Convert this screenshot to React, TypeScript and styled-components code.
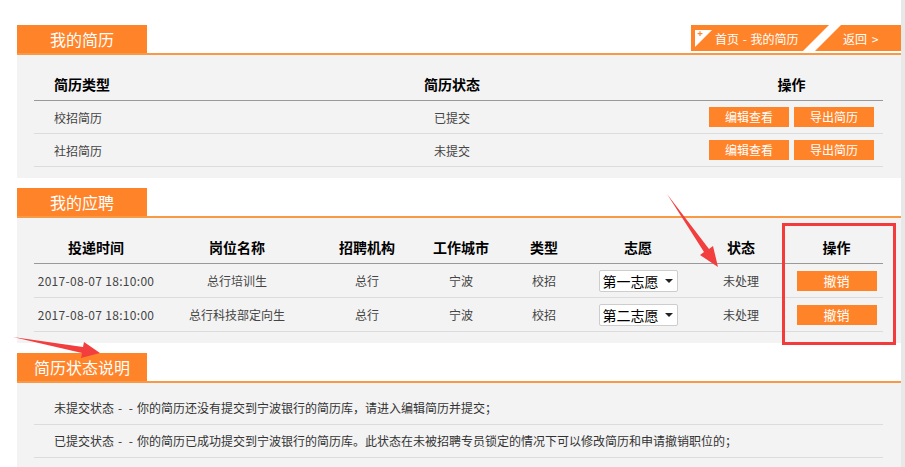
import React from 'react';
import styled, { createGlobalStyle } from 'styled-components';

const Global = createGlobalStyle`
  html, body { margin: 0; padding: 0; background: #fff; }
  body { font-family: "Microsoft YaHei", "Noto Sans CJK SC", sans-serif; color: #333; }
`;

const ORANGE = '#ff8429';
const LINE = '#f89a45';

const Page = styled.div`
  position: relative;
  display: flex;
  width: 905px;
  height: 467px;
  overflow: hidden;
`;

const Main = styled.div`
  flex: 1;
  padding: 25px 0 0 17px;
  display: flex;
  flex-direction: column;
  gap: 10px;
`;

const ScrollStrip = styled.div`
  width: 4px;
  background: #e8e8e8;
`;

const Section = styled.section`
  display: flex;
  flex-direction: column;
`;

const SectionHead = styled.div`
  display: flex;
  justify-content: space-between;
  align-items: flex-start;
  height: 28px;
  border-bottom: 2px solid ${LINE};
`;

const Tab = styled.h2`
  margin: 0;
  width: 130px;
  height: 28px;
  background: ${ORANGE};
  color: #fff;
  font-size: 16px;
  font-weight: normal;
  line-height: 29px;
  text-align: center;
`;

const Crumbs = styled.div`
  display: flex;
  height: 26px;
`;

const CrumbMain = styled.div`
  width: 138px;
  height: 26px;
  box-sizing: border-box;
  padding-left: 4px;
  background: ${ORANGE};
  clip-path: polygon(0 0, 100% 0, calc(100% - 26px) 100%, 0 100%);
  display: flex;
  align-items: center;
  gap: 3px;
  color: #fff;
  font-size: 12px;
  word-spacing: 1px;
`;

const CrumbBack = styled.div`
  width: 86px;
  height: 26px;
  margin-left: -14px;
  box-sizing: border-box;
  padding-left: 28px;
  background: ${ORANGE};
  clip-path: polygon(26px 0, 100% 0, 100% 100%, 0 100%);
  display: flex;
  align-items: center;
  color: #fff;
  font-size: 12px;
  word-spacing: 2px;
`;

const Panel = styled.div<{ $pt?: number }>`
  background: #f3f3f3;
  padding: ${(p) => p.$pt ?? 12}px 18px 11px 17px;
`;

const Table = styled.table`
  width: 849px;
  border-collapse: collapse;
  table-layout: fixed;
`;

const Th = styled.th<{ $left?: boolean }>`
  height: 33px;
  padding: 0 0 0 ${(p) => (p.$left ? '20px' : '0')};
  text-align: ${(p) => (p.$left ? 'left' : 'center')};
  font-size: 14px;
  font-weight: bold;
  color: #000;
  border-bottom: 1px solid #999;
`;

const Td = styled.td<{ $left?: boolean; $h?: number; $wide?: boolean }>`
  height: ${(p) => p.$h ?? 32}px;
  padding: 0 0 0 ${(p) => (p.$left ? '20px' : '0')};
  text-align: ${(p) => (p.$left ? 'left' : 'center')};
  font-size: 12px;
  color: #444;
  letter-spacing: ${(p) => (p.$wide ? '0.3px' : 'normal')};
  border-bottom: 1px solid #dcdcdc;
  white-space: nowrap;
`;

const BtnGroup = styled.div`
  display: flex;
  justify-content: center;
  gap: 5px;
`;

const Btn = styled.button<{ $big?: boolean }>`
  width: 80px;
  height: 20px;
  border: 0;
  padding: 0;
  background: ${ORANGE};
  color: #fff;
  font-family: inherit;
  font-size: ${(p) => (p.$big ? 13 : 12)}px;
  line-height: 20px;
  cursor: pointer;
`;

const SelectWrap = styled.div`
  position: relative;
  display: inline-block;
  width: 79px;
  height: 22px;
  vertical-align: middle;
  &::after {
    content: '';
    position: absolute;
    right: 5px;
    top: 9px;
    border-left: 4px solid transparent;
    border-right: 4px solid transparent;
    border-top: 4px solid #222;
    pointer-events: none;
  }
`;

const Select = styled.select`
  appearance: none;
  -webkit-appearance: none;
  width: 100%;
  height: 100%;
  box-sizing: border-box;
  border: 1px solid #cdcdcd;
  border-radius: 2px;
  background: #fff;
  color: #000;
  font-family: inherit;
  font-size: 14px;
  padding: 0 0 0 3px;
  outline: none;
`;

const NoteRow = styled.div`
  height: 32px;
  line-height: 32px;
  padding-left: 20px;
  font-size: 12px;
  color: #333;
  border-bottom: 1px solid #dcdcdc;
  white-space: nowrap;
`;

const Dashes = styled.span`
  display: inline-block;
  margin: 0 4px 0 4px;
  word-spacing: 4px;
  white-space: pre;
`;

const Highlight = styled.div`
  position: absolute;
  left: 782px;
  top: 223px;
  width: 114px;
  height: 122px;
  box-sizing: border-box;
  border: 3px solid #f43b3b;
  pointer-events: none;
`;

const Annotations = styled.svg`
  position: absolute;
  left: 0;
  top: 0;
  pointer-events: none;
`;

const HomeIcon = () => (
  <svg width="17" height="17" viewBox="0 0 17 17">
    <polygon points="0,0 17,0 0,17" fill="#fff" />
    <path d="M5 1.2V6M2.6 3.6H7.4" stroke={ORANGE} strokeWidth="1.2" />
  </svg>
);

const Choice = ({ value }: { value: string }) => (
  <SelectWrap>
    <Select defaultValue={value}>
      <option>第一志愿</option>
      <option>第二志愿</option>
      <option>第三志愿</option>
    </Select>
  </SelectWrap>
);

const resumes = [
  { type: '校招简历', status: '已提交' },
  { type: '社招简历', status: '未提交' },
];

const applications = [
  { time: '2017-08-07 18:10:00', job: '总行培训生', org: '总行', city: '宁波', kind: '校招', wish: '第一志愿', state: '未处理' },
  { time: '2017-08-07 18:10:00', job: '总行科技部定向生', org: '总行', city: '宁波', kind: '校招', wish: '第二志愿', state: '未处理' },
];

const notes = [
  { label: '未提交状态', text: '你的简历还没有提交到宁波银行的简历库，请进入编辑简历并提交；' },
  { label: '已提交状态', text: '你的简历已成功提交到宁波银行的简历库。此状态在未被招聘专员锁定的情况下可以修改简历和申请撤销职位的；' },
];

const appCols = [124, 158, 102, 86, 80, 108, 98, 93];

export default function App() {
  return (
    <Page>
      <Global />
      <Main>
        <Section>
          <SectionHead>
            <Tab>我的简历</Tab>
            <Crumbs>
              <CrumbMain>
                <HomeIcon />
                <span>首页 - 我的简历</span>
              </CrumbMain>
              <CrumbBack>返回 &gt;</CrumbBack>
            </Crumbs>
          </SectionHead>
          <Panel>
            <Table>
              <colgroup>
                <col style={{ width: 170 }} />
                <col style={{ width: 496 }} />
                <col style={{ width: 183 }} />
              </colgroup>
              <thead>
                <tr>
                  <Th $left>简历类型</Th>
                  <Th>简历状态</Th>
                  <Th>操作</Th>
                </tr>
              </thead>
              <tbody>
                {resumes.map((r) => (
                  <tr key={r.type}>
                    <Td $left>{r.type}</Td>
                    <Td>{r.status}</Td>
                    <Td>
                      <BtnGroup>
                        <Btn>编辑查看</Btn>
                        <Btn>导出简历</Btn>
                      </BtnGroup>
                    </Td>
                  </tr>
                ))}
              </tbody>
            </Table>
          </Panel>
        </Section>

        <Section>
          <SectionHead>
            <Tab>我的应聘</Tab>
          </SectionHead>
          <Panel>
            <Table>
              <colgroup>
                {appCols.map((w, i) => (
                  <col key={i} style={{ width: w }} />
                ))}
              </colgroup>
              <thead>
                <tr>
                  <Th>投递时间</Th>
                  <Th>岗位名称</Th>
                  <Th>招聘机构</Th>
                  <Th>工作城市</Th>
                  <Th>类型</Th>
                  <Th>志愿</Th>
                  <Th>状态</Th>
                  <Th>操作</Th>
                </tr>
              </thead>
              <tbody>
                {applications.map((a, i) => (
                  <tr key={i}>
                    <Td $h={33} $wide>{a.time}</Td>
                    <Td $h={33}>{a.job}</Td>
                    <Td $h={33}>{a.org}</Td>
                    <Td $h={33}>{a.city}</Td>
                    <Td $h={33}>{a.kind}</Td>
                    <Td $h={33}>
                      <Choice value={a.wish} />
                    </Td>
                    <Td $h={33}>{a.state}</Td>
                    <Td $h={33}>
                      <BtnGroup>
                        <Btn $big>撤销</Btn>
                      </BtnGroup>
                    </Td>
                  </tr>
                ))}
              </tbody>
            </Table>
          </Panel>
        </Section>

        <Section>
          <SectionHead>
            <Tab>简历状态说明</Tab>
          </SectionHead>
          <Panel $pt={9}>
            {notes.map((n) => (
              <NoteRow key={n.label}>
                {n.label}
                <Dashes>- -</Dashes>
                {n.text}
              </NoteRow>
            ))}
          </Panel>
        </Section>
      </Main>
      <ScrollStrip />

      <Highlight />
      <Annotations width="905" height="467" viewBox="0 0 905 467">
        <polygon
          points="667,194 709,249 713,246 718,267 700,255 704,252"
          fill="#f23e3e"
        />
        <polygon
          points="13,337 83,347 84,342 100,353 81,358 82,353"
          fill="#f23e3e"
        />
      </Annotations>
    </Page>
  );
}
